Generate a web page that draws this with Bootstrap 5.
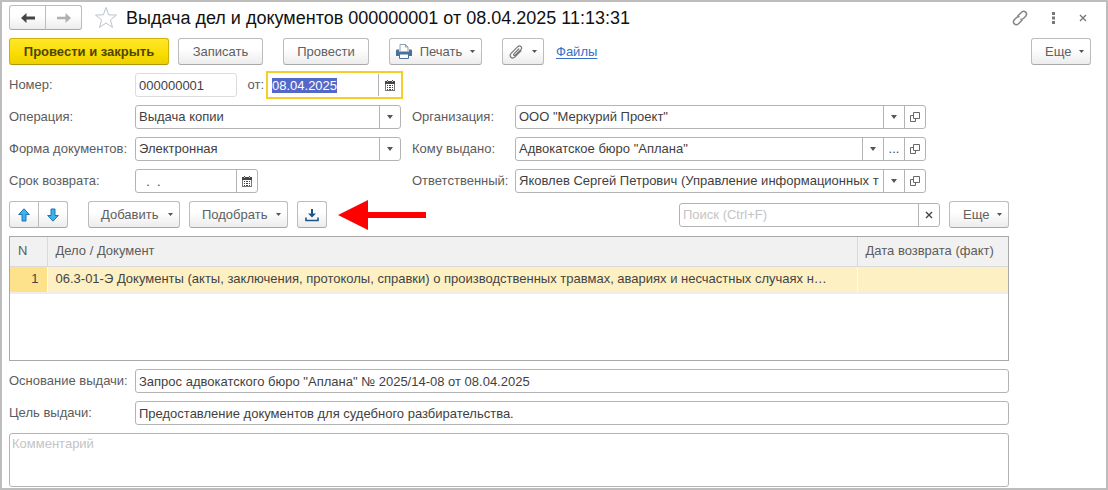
<!DOCTYPE html>
<html lang="ru">
<head>
<meta charset="utf-8">
<meta name="viewport" content="width=device-width, initial-scale=1">
<title>Выдача дел и документов</title>
<link href="https://cdn.jsdelivr.net/npm/bootstrap@5.3.0/dist/css/bootstrap.min.css" rel="stylesheet">
<style>
  body { font-family: "Liberation Sans", Arial, sans-serif; font-size: 13px; line-height: 16px; color: #4a4a4a; background: #fff; }
  .frame { border: 2px solid #bdbdbd; padding: 3px 15px 1px 7px; min-height: 100vh; }
  .doc-title { font-size: 18px; line-height: 24px; color: #111; }
  .head-row { height: 25px; margin-bottom: 8px; }
  .tool-row { height: 27px; }
  .btn { --bs-btn-font-size: 13px; --bs-btn-line-height: 16px; --bs-btn-padding-x: 12px; --bs-btn-padding-y: 0; --bs-btn-border-radius: 3px; --bs-btn-color: #606060; --bs-btn-border-color: #bcbcbc; --bs-btn-hover-color: #404040; --bs-btn-hover-border-color: #999; --bs-btn-hover-bg: #eee;
    height: 27px; display: inline-flex; align-items: center; justify-content: center; background-image: linear-gradient(#fff 40%, #ececec); border-bottom-color: #a8a8a8; white-space: nowrap; }
  .btn-main { --bs-btn-color: #4d4600; --bs-btn-border-color: #d0b000; background-image: linear-gradient(#ffe82c, #fadc00 60%, #ecd000); border-bottom-color: #b09600; font-weight: bold; width: 160px; }
  .btn-pair { width: 37px; height: 25px; padding: 0; }
  .btn-move { width: 30px; padding: 0; }
  .btn-plain { border: 0; background: none; padding: 0; color: #777; display: inline-flex; align-items: center; justify-content: center; }
  .btn-more { width: 60px; padding: 0 6px 0 13px; justify-content: space-between; }
  .near { margin-left: 9px; }
  .apart { margin-left: 20px; }
  .w-save { width: 85px; } .w-post { width: 86px; } .w-print { width: 93px; padding: 0 6px; } .w-clip { width: 42px; padding: 0 6px; }
  .w-add { width: 92px; padding: 0 6px 0 12px; } .w-pick { width: 99px; padding: 0 6px 0 12px; } .w-load { width: 30px; padding: 0; }
  .tri { width: 5px; height: 3px; background: #555; clip-path: polygon(0 0, 100% 0, 50% 100%); flex: none; }
  .files-link { color: #3a6fc4; text-underline-offset: 2px; margin-left: 12px; }
  .sheet { margin-right: 82px; }
  .form-area { display: grid; grid-template-columns: 126px minmax(0, 266fr) 114px minmax(0, 411fr); row-gap: 8px; margin-right: 83px; }
  .form-area label, .wide-row label { color: #5c5c5c; white-space: nowrap; }
  .lbl-right { padding-left: 11px; }
  .wide-row label { width: 126px; flex: none; }
  .field { display: flex; height: 24px; border: 1px solid #b4b4b4; border-radius: 3px; background: #fff; overflow: hidden; }
  .field input, .field select { border: 0; outline: 0; padding: 0 3px; background-color: transparent; color: #3f3f3f; flex: 1 1 0; min-width: 0; height: 22px; font-size: 13px; line-height: 16px; }
  .field select { appearance: none; padding: 0 21px 0 3px; background: url("data:image/svg+xml,%3Csvg xmlns='http://www.w3.org/2000/svg' width='21' height='22'%3E%3Cpath d='M0 0h1v22H0z' fill='%23b4b4b4'/%3E%3Cpath d='M8 9h6l-3 4z' fill='%23555'/%3E%3C/svg%3E") right top no-repeat; }
  .field .cell { border: 0; border-left: 1px solid #b4b4b4; background: none; width: 21px; padding: 0; flex: none; display: flex; align-items: center; justify-content: center; color: #444; }
  .field.readonly { border-color: #dcdcdc; width: 102px; }
  .field.current { border: 2px solid #f7cd2c; border-radius: 0; height: 28px; width: 137px; margin: -2px; flex: none; }
  .field.current input { height: 24px; padding: 0 4px; }
  .field.current .cell { margin: 1px 0; width: 23px; }
  .field ::selection { background: #5468c8; color: #fff; }
  .field-term { width: 123px; }
  .field input::placeholder, .note-box::placeholder { color: #c4c4c4; opacity: 1; }
  .field-search { width: 261px; }
  .red-arrow { margin: -2px 0 -2px 11px; flex: none; }
  .grid-box { border: 1px solid #a9a9a9; height: 125px; }
  .grid-box table { table-layout: fixed; width: 100%; }
  .grid-box th { background: #f1f1f1; font-weight: normal; color: #5c5c5c; height: 29px; padding: 0 8px; border-right: 1px solid #d9d9d9; border-bottom: 1px solid #d9d9d9; white-space: nowrap; }
  .grid-box td { background: #fdf1c4; height: 27px; padding: 0 8px; border-right: 1px solid #fffbe8; border-bottom: 2px solid #ededed; color: #444; overflow: hidden; text-overflow: ellipsis; white-space: nowrap; }
  .grid-box th:last-child, .grid-box td:last-child { border-right: 0; }
  .grid-box td.num { background: #fde28b; }
  .col-n { width: 37px; } .col-date { width: 151px; }
  .note-box { display: block; width: 100%; height: 54px; border: 1px solid #b4b4b4; border-radius: 3px; padding: 2px; resize: none; font-size: 13px; line-height: 16px; }
</style>
</head>
<body>
<svg class="d-none" aria-hidden="true">
  <symbol id="calendar" viewBox="0 0 10 11"><path d="M0 1h10v3H0z" fill="#444"/><path d="M2 0h1v2H2zM7 0h1v2H7z" fill="#444"/><path d="M2 1h1v1H2zM7 1h1v1H7z" fill="#ccc"/><path d="M0 4h1v7H0zM9 4h1v7H9zM1 10h8v1H1z" fill="#777"/><path d="M2 5h1v1H2zM4 5h2v1H4zM7 5h1v1H7zM2 7h1v1H2zM4 7h2v1H4zM7 7h1v1H7zM2 9h1v1H2zM4 9h2v1H4zM7 9h1v1H7z" fill="#444"/></symbol>
  <symbol id="open" viewBox="0 0 10 10"><path d="M3.500.5h6v6h-6zM3 3.500H.5v6h5V7" fill="none" stroke="#666"/></symbol>
  <symbol id="cross" viewBox="0 0 8 8"><path d="M1 1l6 6M7 1L1 7" stroke="currentColor" stroke-width="1.400"/></symbol>
  <symbol id="up" viewBox="0 0 12 14"><path d="M6 .8L11.300 6.500H8V13H4V6.500H.7z" fill="#3fb0ea" stroke="#1b75b5" stroke-linejoin="round"/></symbol>
</svg>
<main class="frame">
  <header class="head-row d-flex align-items-center">
    <div class="btn-group">
      <button type="button" class="btn btn-pair" aria-label="Назад"><svg width="14" height="10" viewBox="0 0 14 10"><path d="M0 5l5.500-5v3.600H14v2.800H5.500V10z" fill="#444"/></svg></button>
      <button type="button" class="btn btn-pair" aria-label="Вперед"><svg width="14" height="10" viewBox="0 0 14 10"><path d="M14 5L8.500 0v3.800H0v2.400h8.500V10z" fill="#b0b0b0"/></svg></button>
    </div>
    <button type="button" class="btn-plain mx-2 ps-1" aria-label="В избранное"><svg width="24" height="23" viewBox="0 0 24 23"><path d="M12 1.500l2.700 7.300 7.800.3-6.100 4.800 2.100 7.500L12 17.100l-6.500 4.300 2.100-7.500L1.500 9.100l7.800-.3z" fill="#fff" stroke="#bcc3cc"/></svg></button>
    <h1 class="doc-title m-0 me-auto text-nowrap">Выдача дел и документов 000000001 от 08.04.2025 11:13:31</h1>
    <div class="d-flex align-items-center gap-3">
      <button type="button" class="btn-plain" aria-label="Ссылка"><svg width="16" height="16" viewBox="0 0 16 16" fill="none" stroke="#858585" stroke-width="1.500" stroke-linecap="round"><path d="M6 5.800l3.500-3.600c3-2.600 6.600 1 4.200 4L11.400 8.500c-.8.700-1.600.9-2.400.8M10 10.200l-3.500 3.600c-3 2.600-6.600-1-4.200-4l2.300-2.300c.8-.7 1.600-.9 2.400-.8"/></svg></button>
      <button type="button" class="btn-plain px-2" aria-label="Меню"><svg width="3" height="12" viewBox="0 0 3 12"><path d="M0 0h3v3H0zM0 4.500h3v3H0zM0 9h3v3H0z" fill="#777"/></svg></button>
      <button type="button" class="btn-plain me-1" aria-label="Закрыть"><svg width="8" height="8"><use href="#cross"/></svg></button>
    </div>
  </header>

  <div class="tool-row d-flex align-items-center">
    <button type="button" class="btn btn-main">Провести и закрыть</button>
    <button type="button" class="btn w-save near">Записать</button>
    <button type="button" class="btn w-post apart">Провести</button>
    <button type="button" class="btn w-print justify-content-between apart"><svg width="16" height="15" viewBox="0 0 16 15"><path d="M4 7V.5h5.500L12 3v4" fill="#fff" stroke="#8da0b2"/><path d="M9.500.5V3H12" fill="none" stroke="#8da0b2"/><path d="M0 6.500q0-1 1-1h2v2h10v-2h2q1 0 1 1V12H0z" fill="#4b7298"/><path d="M3.500 10h9v4.500h-9z" fill="#fff" stroke="#4b7298"/></svg>Печать<span class="tri"></span></button>
    <button type="button" class="btn w-clip justify-content-between apart" aria-label="Прикрепить"><svg width="14" height="14" viewBox="0 0 14 14" fill="none" stroke="#777" stroke-width="1.200" stroke-linecap="round"><path d="M9.800 4L5 8.800c-1 1.100.3 2.300 1.300 1.300l5.500-5.400c2.200-2.400-.8-5-3-3L2.300 8.200c-3 3.100.7 6.600 3.700 3.700l6-6"/></svg><span class="tri"></span></button>
    <a href="#" class="files-link">Файлы</a>
    <button type="button" class="btn btn-more ms-auto">Еще<span class="tri"></span></button>
  </div>

  <div class="sheet">
    <div class="form-area mt-2 align-items-center">
      <label for="number">Номер:</label>
      <div class="d-flex align-items-center">
        <div class="field readonly"><input id="number" value="000000001" readonly></div>
        <label for="date" class="ms-auto me-1">от:</label>
        <div class="field current"><input id="date" value="08.04.2025"><button type="button" class="cell" aria-label="Календарь"><svg width="10" height="11"><use href="#calendar"/></svg></button></div>
      </div>
      <span></span><span></span>

      <label for="operation">Операция:</label>
      <div class="field"><select id="operation"><option>Выдача копии</option></select></div>
      <label for="org" class="lbl-right">Организация:</label>
      <div class="field"><select id="org"><option>ООО "Меркурий Проект"</option></select><button type="button" class="cell" aria-label="Открыть"><svg width="10" height="10"><use href="#open"/></svg></button></div>

      <label for="docform">Форма документов:</label>
      <div class="field"><select id="docform"><option>Электронная</option></select></div>
      <label for="recipient" class="lbl-right">Кому выдано:</label>
      <div class="field"><select id="recipient"><option>Адвокатское бюро "Аплана"</option></select><button type="button" class="cell">...</button><button type="button" class="cell" aria-label="Открыть"><svg width="10" height="10"><use href="#open"/></svg></button></div>

      <label for="term">Срок возврата:</label>
      <div class="field field-term"><input id="term" value="  .  ."><button type="button" class="cell" aria-label="Календарь"><svg width="10" height="11"><use href="#calendar"/></svg></button></div>
      <label for="person" class="lbl-right">Ответственный:</label>
      <div class="field"><select id="person"><option>Яковлев Сергей Петрович (Управление информационных т</option></select><button type="button" class="cell" aria-label="Открыть"><svg width="10" height="10"><use href="#open"/></svg></button></div>
    </div>

    <div class="tool-row d-flex align-items-center my-2">
      <div class="btn-group">
        <button type="button" class="btn btn-move" aria-label="Вверх"><svg width="12" height="14"><use href="#up"/></svg></button>
        <button type="button" class="btn btn-move" aria-label="Вниз"><svg width="12" height="14" viewBox="0 0 12 14"><use href="#up" transform="rotate(180 6 7)" width="12" height="14"/></svg></button>
      </div>
      <button type="button" class="btn w-add justify-content-between apart">Добавить<span class="tri"></span></button>
      <button type="button" class="btn w-pick justify-content-between near">Подобрать<span class="tri"></span></button>
      <button type="button" class="btn w-load near" aria-label="Загрузить"><svg width="14" height="14" viewBox="0 0 14 14"><path d="M6 1h2v4.500h3L7 9.500 3 5.500h3z" fill="#1d5587"/><path d="M1 9.500V12.500h12V9.500" fill="none" stroke="#1d5587" stroke-width="1.600"/></svg></button>
      <svg class="red-arrow" width="88" height="30" viewBox="0 0 88 30"><path d="M0 15L30 0v12h58v6H30v12z" fill="#f00"/></svg>
      <div class="field field-search ms-auto"><input type="text" placeholder="Поиск (Ctrl+F)" aria-label="Поиск"><button type="button" class="cell" aria-label="Очистить"><svg width="8" height="8"><use href="#cross"/></svg></button></div>
      <button type="button" class="btn btn-more near">Еще<span class="tri"></span></button>
    </div>

    <div class="grid-box">
      <table>
        <colgroup><col class="col-n"><col><col class="col-date"></colgroup>
        <thead><tr><th scope="col">N</th><th scope="col">Дело / Документ</th><th scope="col">Дата возврата (факт)</th></tr></thead>
        <tbody><tr><td class="num text-end">1</td><td>06.3-01-Э Документы (акты, заключения, протоколы, справки) о производственных травмах, авариях и несчастных случаях н…</td><td></td></tr></tbody>
      </table>
    </div>

    <div class="wide-row d-flex align-items-center mt-2"><label for="basis">Основание выдачи:</label><div class="field flex-fill"><input id="basis" value='Запрос адвокатского бюро "Аплана" № 2025/14-08 от 08.04.2025'></div></div>
    <div class="wide-row d-flex align-items-center mt-2"><label for="purpose">Цель выдачи:</label><div class="field flex-fill"><input id="purpose" value="Предоставление документов для судебного разбирательства."></div></div>
    <textarea class="note-box mt-2" placeholder="Комментарий" aria-label="Комментарий"></textarea>
  </div>
</main>
<script src="https://cdn.jsdelivr.net/npm/bootstrap@5.3.0/dist/js/bootstrap.bundle.min.js"></script>
<script>
  const dateInput = document.getElementById('date');
  dateInput.focus();
  dateInput.select();
</script>
</body>
</html>
